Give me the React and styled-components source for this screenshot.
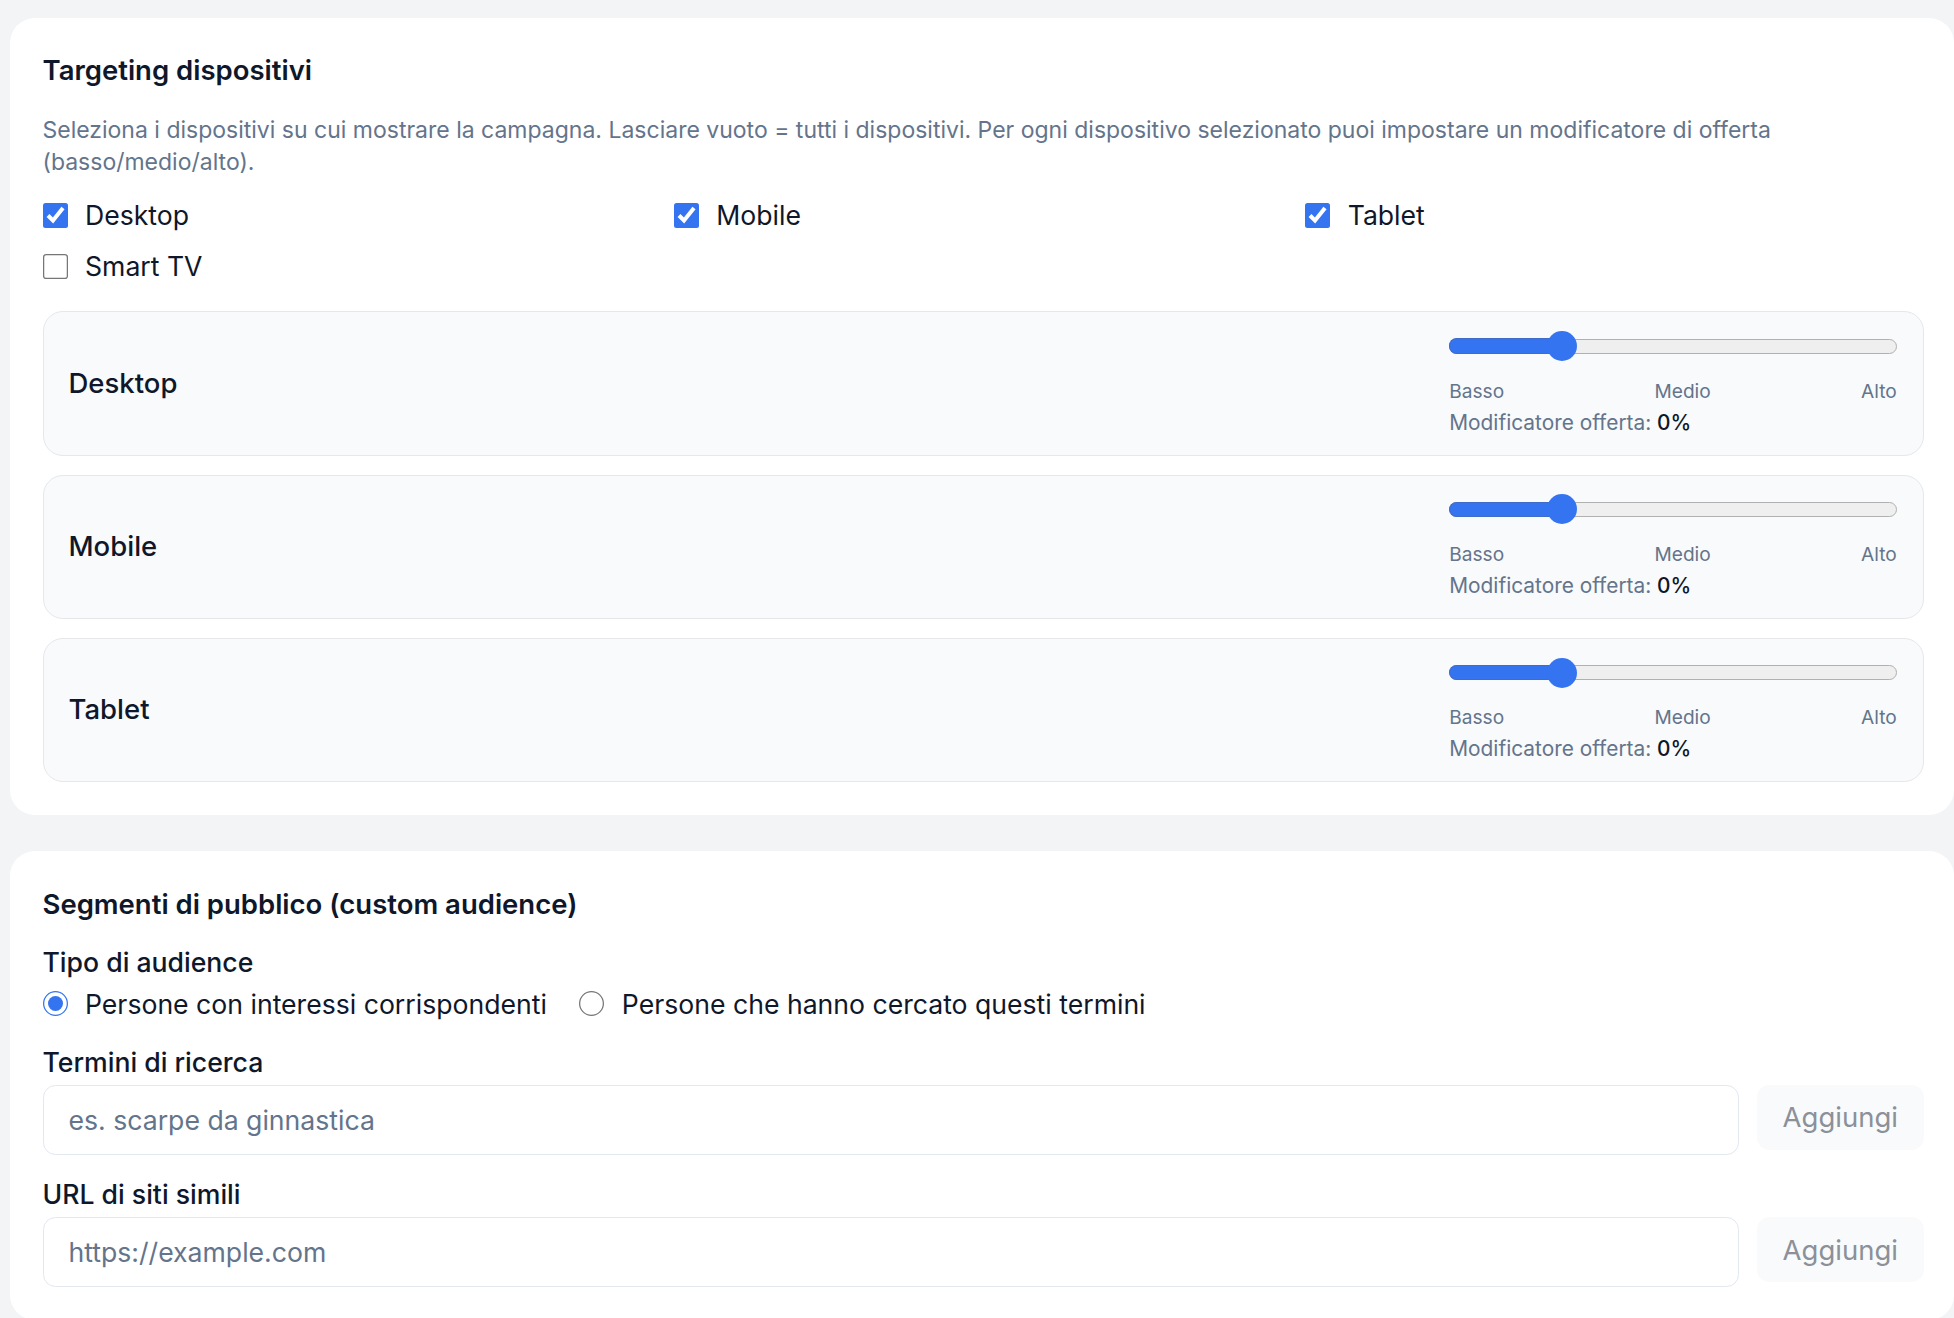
import React from "react";
import styled, { createGlobalStyle } from "styled-components";

const Global = createGlobalStyle`
  html, body { margin: 0; padding: 0; background: #f3f4f6; overflow: hidden; }
  body { font-family: Inter, "Noto Sans", "Liberation Sans", sans-serif; color: #0f172a; }
  #root { zoom: 1.25; }
  * { box-sizing: border-box; }
`;

const Page = styled.div`
  display: flex;
  flex-direction: column;
  gap: 29px;
  padding: 14px 0 0 8px;
`;

const Card = styled.section`
  background: #ffffff;
  border-radius: 20px;
  padding: 26px 24px 26px 26px;
  display: flex;
  flex-direction: column;
`;

const Title = styled.h2`
  margin: 0;
  font-size: 22px;
  line-height: 32px;
  font-weight: 600;
  color: #0f172a;
`;

const Description = styled.p`
  margin: 19px 0 0;
  font-size: 18.4px;
  line-height: 26px;
  color: #64748b;
`;

const CheckGrid = styled.div`
  margin-top: 14px;
  display: grid;
  grid-template-columns: repeat(3, 1fr);
  column-gap: 10px;
  row-gap: 11px;
`;

const Option = styled.label`
  display: flex;
  align-items: center;
  gap: 14px;
  height: 30px;
  font-size: 21.3px;
  color: #0f172a;
  white-space: nowrap;
`;

const Check = styled.input.attrs({ type: "checkbox" })`
  width: 20px;
  height: 20px;
  margin: 0;
  accent-color: #3574f0;
`;

const Radio = styled.input.attrs({ type: "radio" })`
  width: 20px;
  height: 20px;
  margin: 0;
  accent-color: #3574f0;
`;

const DeviceList = styled.div`
  margin-top: 21px;
  display: flex;
  flex-direction: column;
  gap: 15px;
`;

const DeviceBox = styled.div`
  display: flex;
  align-items: center;
  justify-content: space-between;
  padding: 15px 21px 16px 20px;
  border: 1px solid #e5e7eb;
  border-radius: 16px;
  background: #f8fafc;
`;

const DeviceName = styled.div`
  font-size: 22px;
  font-weight: 500;
  color: #0f172a;
`;

const Control = styled.div`
  width: 358px;
  display: flex;
  flex-direction: column;
`;

const SliderArea = styled.div`
  position: relative;
  height: 24px;
  display: flex;
  align-items: center;
`;

const Track = styled.div`
  position: relative;
  width: 100%;
  height: 12px;
  border-radius: 6px;
  background: #efefef;
  border: 1px solid #b0b0b0;
`;

const Fill = styled.div`
  position: absolute;
  left: -1px;
  top: -1px;
  bottom: -1px;
  border-radius: 6px 0 0 6px;
  background: #3574f0;
  border: 1px solid #3f6cc9;
  border-right: none;
`;

const Thumb = styled.div`
  position: absolute;
  top: 50%;
  width: 24px;
  height: 24px;
  border-radius: 50%;
  background: #3574f0;
  transform: translate(-50%, -50%);
`;

const Scale = styled.div`
  margin-top: 14px;
  display: flex;
  justify-content: space-between;
  font-size: 15.3px;
  line-height: 20px;
  color: #64748b;
`;

const Modifier = styled.div`
  margin-top: 5px;
  font-size: 16.7px;
  line-height: 20px;
  color: #64748b;
`;

const ModValue = styled.span`
  color: #0f172a;
  font-weight: 500;
`;

const FieldLabel = styled.div`
  margin-top: ${(p) => p.$mt}px;
  font-size: 21.3px;
  line-height: 30px;
  font-weight: 500;
  color: #0f172a;
`;

const RadioRow = styled.div`
  margin-top: 3px;
  display: flex;
  gap: 26px;
`;

const InputRow = styled.div`
  margin-top: 3px;
  display: flex;
  align-items: flex-start;
  gap: 14px;
`;

const TextInput = styled.input`
  flex: 1;
  height: 56px;
  padding: 0 20px;
  border: 1px solid #e2e8f0;
  border-radius: 10px;
  background: #ffffff;
  font-family: inherit;
  font-size: 21.3px;
  color: #0f172a;
  outline: none;
  &::placeholder { color: #64748b; }
`;

const AddButton = styled.button`
  width: 134px;
  height: 52px;
  border: none;
  border-radius: 10px;
  background: #f8fafc;
  font-family: inherit;
  font-size: 22px;
  color: #8b9099;
`;

function DeviceSlider({ name, value }) {
  return (
    <DeviceBox>
      <DeviceName>{name}</DeviceName>
      <Control>
        <SliderArea>
          <Track>
            <Fill style={{ width: `${value}%` }} />
            <Thumb style={{ left: `${value}%` }} />
          </Track>
        </SliderArea>
        <Scale>
          <span>Basso</span>
          <span>Medio</span>
          <span>Alto</span>
        </Scale>
        <Modifier>
          Modificatore offerta: <ModValue>0%</ModValue>
        </Modifier>
      </Control>
    </DeviceBox>
  );
}

export default function App() {
  return (
    <>
      <Global />
      <Page>
        <Card>
          <Title>Targeting dispositivi</Title>
          <Description>
            Seleziona i dispositivi su cui mostrare la campagna. Lasciare vuoto = tutti i dispositivi. Per ogni
            dispositivo selezionato puoi impostare un modificatore di offerta (basso/medio/alto).
          </Description>
          <CheckGrid>
            <Option><Check defaultChecked />Desktop</Option>
            <Option><Check defaultChecked />Mobile</Option>
            <Option><Check defaultChecked />Tablet</Option>
            <Option><Check />Smart TV</Option>
          </CheckGrid>
          <DeviceList>
            <DeviceSlider name="Desktop" value={25} />
            <DeviceSlider name="Mobile" value={25} />
            <DeviceSlider name="Tablet" value={25} />
          </DeviceList>
        </Card>
        <Card>
          <Title>Segmenti di pubblico (custom audience)</Title>
          <FieldLabel $mt={16}>Tipo di audience</FieldLabel>
          <RadioRow>
            <Option><Radio name="aud" defaultChecked />Persone con interessi corrispondenti</Option>
            <Option><Radio name="aud" />Persone che hanno cercato questi termini</Option>
          </RadioRow>
          <FieldLabel $mt={17}>Termini di ricerca</FieldLabel>
          <InputRow>
            <TextInput placeholder="es. scarpe da ginnastica" />
            <AddButton>Aggiungi</AddButton>
          </InputRow>
          <FieldLabel $mt={17}>URL di siti simili</FieldLabel>
          <InputRow>
            <TextInput placeholder="https://example.com" />
            <AddButton>Aggiungi</AddButton>
          </InputRow>
        </Card>
      </Page>
    </>
  );
}
